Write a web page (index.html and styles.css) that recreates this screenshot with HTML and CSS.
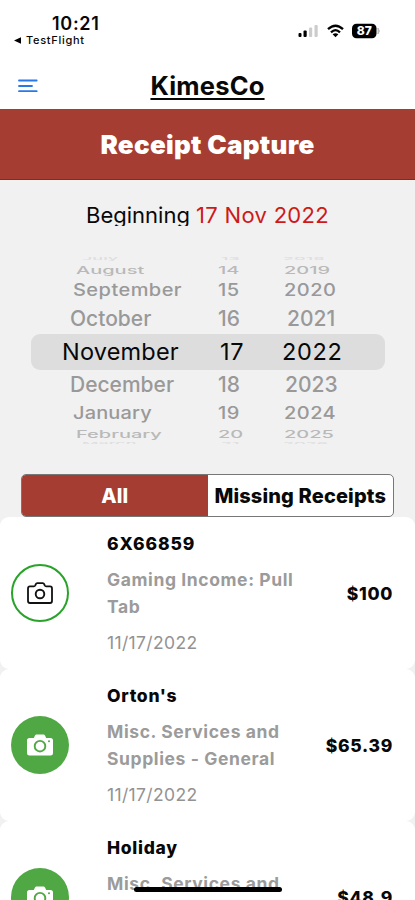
FILE: index.html
```html
<!DOCTYPE html>
<html lang="en">
<head>
<meta charset="utf-8">
<title>Receipt Capture</title>
<link rel="stylesheet" href="styles.css">
</head>
<body>
<svg class="defs" aria-hidden="true">
  <symbol id="camera-outline" viewBox="0 0 26 22">
    <path d="M3 4.4H6.8Q7.8 4.4 8.3 3.4L8.7 2.4Q9.2 1.2 10.3 1.2H15.7Q16.8 1.2 17.3 2.4L17.7 3.4Q18.2 4.4 19.2 4.4H23Q25 4.4 25 6.4V19Q25 21 23 21H3Q1 21 1 19V6.4Q1 4.4 3 4.4Z" fill="none" stroke="currentColor" stroke-width="1.8"/>
    <circle cx="13" cy="12" r="4.3" fill="none" stroke="currentColor" stroke-width="1.9"/>
  </symbol>
  <symbol id="camera-solid" viewBox="0 0 26 22">
    <path d="M2.5 4H6.8L8 1.4Q8.4.4 9.6.4H16.4Q17.6.4 18 1.4L19.2 4H23.5Q26 4 26 6.5V19.2Q26 21.6 23.5 21.6H2.5Q0 21.6 0 19.2V6.5Q0 4 2.5 4Z" fill="currentColor"/>
    <circle cx="13" cy="12.2" r="5.3" fill="none" stroke="#50a845" stroke-width="1.9"/>
    <circle cx="22" cy="7.2" r="1" fill="#50a845"/>
  </symbol>
</svg>
<div class="screen">
  <header class="top">
    <div class="status">
      <div class="clock">
        <div class="time">10:21</div>
        <div class="back"><svg width="7" height="7" viewBox="0 0 7 7"><path d="M7 .3V6.7L0 3.5Z"/></svg><span>TestFlight</span></div>
      </div>
      <svg class="indicators" width="84" height="18" viewBox="0 0 84 18">
        <rect x="0.5" y="10" width="3" height="4" rx="1"/>
        <rect x="5.5" y="7.5" width="3.2" height="6.5" rx="1"/>
        <rect x="11" y="4.5" width="3.2" height="9.5" rx="1" fill="#ccc"/>
        <rect x="16.5" y="2" width="3.2" height="12" rx="1" fill="#ccc"/>
        <path d="M30 6.2Q37.5-.8 45 6.2M33 9.3Q37.5 5 42 9.3" fill="none" stroke="#000" stroke-width="2.3"/>
        <path d="M34.6 11.3Q37.5 9 40.4 11.3L37.5 14.3Z"/>
        <rect x="54" y="0.7" width="24.5" height="14.6" rx="4.5"/>
        <path d="M80 5Q82.6 8 80 11Z" fill="#bbb" stroke="#bbb"/>
        <text x="66.3" y="12.4" text-anchor="middle" class="charge">87</text>
      </svg>
    </div>
    <div class="nav">
      <svg class="menu" width="20" height="14" viewBox="0 0 20 14"><path d="M1 1.5H18.7M1 7H14M1 12.2H18.7" stroke="#2878e8" stroke-width="1.8" stroke-linecap="round"/></svg>
      <h1>KimesCo</h1>
    </div>
  </header>
  <h2 class="banner"><span>Receipt Capture</span></h2>
  <p class="beginning"><span class="lead">Beginning</span> <span class="date">17 Nov 2022</span></p>
  <div class="picker">
    <div class="row edge first"><span>July</span><span>13</span><span>2018</span></div>
    <div class="row far august"><span>August</span><span>14</span><span>2019</span></div>
    <div class="row mid september"><span>September</span><span>15</span><span>2020</span></div>
    <div class="row near october"><span>October</span><span>16</span><span class="shift">2021</span></div>
    <div class="row selected"><span>November</span><span>17</span><span>2022</span></div>
    <div class="row near december"><span>December</span><span>18</span><span>2023</span></div>
    <div class="row mid january"><span>January</span><span>19</span><span>2024</span></div>
    <div class="row far february"><span>February</span><span>20</span><span>2025</span></div>
    <div class="row edge last"><span>March</span><span>21</span><span>2026</span></div>
  </div>
  <div class="tabs"><div class="tab active"><span>All</span></div><div class="tab"><span>Missing Receipts</span></div></div>
  <main>
    <article class="card">
      <div class="badge outline"><svg width="26" height="22"><use href="#camera-outline"/></svg></div>
      <div class="info"><h3 class="code">6X66859</h3><p class="category">Gaming Income: Pull<br>Tab</p><p class="day">11/17/2022</p></div>
      <div class="amount">$100</div>
    </article>
    <article class="card">
      <div class="badge"><svg width="26" height="22"><use href="#camera-solid"/></svg></div>
      <div class="info"><h3>Orton's</h3><p class="category">Misc. Services and<br>Supplies - General</p><p class="day">11/17/2022</p></div>
      <div class="amount">$65.39</div>
    </article>
    <article class="card">
      <div class="badge"><svg width="26" height="22"><use href="#camera-solid"/></svg></div>
      <div class="info"><h3>Holiday</h3><p class="category">Misc. Services and</p></div>
      <div class="amount">$48.9</div>
    </article>
  </main>
  <div class="home"></div>
</div>
</body>
</html>
```
FILE: styles.css
```css
* { box-sizing: border-box; }
body, h1, h2, h3, p { margin: 0; }
body { font-family: Inter, "Liberation Sans", sans-serif; color: #080808; overflow: hidden; }
.defs { position: absolute; width: 0; height: 0; }
.screen { position: relative; width: 415px; height: 900px; overflow: hidden; background: #f1f1f1; }

.top { height: 109px; background: #fff; }
.status { display: flex; justify-content: space-between; height: 62px; padding: 13px 33px 0 14px; }
.time { padding-left: 38px; font-size: 18px; line-height: 21px; font-weight: 600; letter-spacing: 0.7px; }
.back { display: flex; align-items: center; gap: 5px; height: 12px; font-size: 11px; font-weight: 500; letter-spacing: 0.7px; }
.indicators { margin-top: 10px; }
.charge { fill: #fff; font-size: 12px; font-weight: 800; }
.nav { display: grid; grid-template-columns: 130px 155px 130px; align-items: center; height: 47px; }
.menu { margin-left: 18px; }
.nav h1 { text-align: center; font-size: 25.5px; line-height: 30px; font-weight: 700; letter-spacing: .2px; text-decoration: underline; text-decoration-thickness: 2px; text-underline-offset: 3px; }

.banner { display: flex; align-items: center; justify-content: center; height: 71px; background: #a63d32; color: #fff; font-size: 26px; font-weight: 900; letter-spacing: .3px; border-bottom: 1px solid #982218; }
.beginning { height: 45px; margin-top: 23px; text-align: center; font-size: 22px; line-height: 24px; white-space: nowrap; }
.lead { display: inline-block; height: 23px; overflow: hidden; vertical-align: top; }
.date { color: #ce1919; letter-spacing: .3px; }

.picker { display: flex; flex-direction: column; height: 188px; margin: 8px 30px 0 31px; overflow: hidden; }
.row { display: grid; grid-template-columns: 148px 67px 1fr; flex: none; align-items: center; padding-left: 39px; white-space: nowrap; color: #999; line-height: 0; font-size: 20px; font-weight: 500; }
.row span { display: block; height: 0; transform-origin: left center; }
.selected { height: 35.5px; padding-left: 31px; grid-template-columns: 158px 62px 1fr; border-radius: 9px; background: #ddd; color: #080808; font-size: 23.5px; font-weight: 400; letter-spacing: .2px; }
.selected span + span { letter-spacing: .7px; }
.near { height: 31px; font-size: 21px; }
.mid { height: 26px; padding-left: 42px; grid-template-columns: 145px 66px 1fr; letter-spacing: .45px; }
.mid span { transform: scaleY(.85); }
.far { height: 15px; padding-left: 45px; grid-template-columns: 142px 66px 1fr; color: #b9b9b9; }
.far span { transform: scaleY(.5); }
.edge { height: 6px; padding-left: 51px; grid-template-columns: 139px 62px 1fr; color: #dedede; }
.edge span { transform: scale(.9, .2); }
.january { height: 25px; }
.january span:first-child { letter-spacing: .15px; }
.february { height: 16px; }
.last { height: 5px; }
.shift { padding-left: 2px; }

.tabs { display: flex; height: 43px; margin: 30px 21px 0; border: 1px solid #777; border-radius: 5px; overflow: hidden; background: #fff; font-size: 20px; font-weight: 800; letter-spacing: .15px; }
.tab { flex: 1; display: flex; align-items: center; justify-content: center; white-space: nowrap; }
.active { background: #a63d32; color: #fff; }

.card { display: grid; grid-template-columns: 58px 190px 1fr; column-gap: 38px; align-items: center; height: 152px; padding: 0 22px 0 11px; border-radius: 9px; background: #fff; }
.badge { display: flex; align-items: center; justify-content: center; width: 58px; height: 58px; border-radius: 50%; background: #50a845; color: #fff; }
.outline { border: 2px solid #29a329; background: #fff; color: #111; }
.info { align-self: start; padding-top: 14px; white-space: nowrap; }
.info h3 { font-size: 17.5px; line-height: 26px; font-weight: 800; letter-spacing: .7px; }
.info .code { letter-spacing: .9px; }
.category { padding-top: 9px; font-size: 17.5px; line-height: 27px; font-weight: 700; letter-spacing: .6px; color: #9b9b9b; }
.day { padding-top: 9px; font-size: 17.5px; line-height: 27px; letter-spacing: .35px; color: #929292; }
.amount { justify-self: end; margin-left: -20px; font-size: 17.5px; font-weight: 800; letter-spacing: .7px; }
.home { position: absolute; left: 134px; top: 887px; width: 148px; height: 5px; border-radius: 3px; background: #000; }
```
